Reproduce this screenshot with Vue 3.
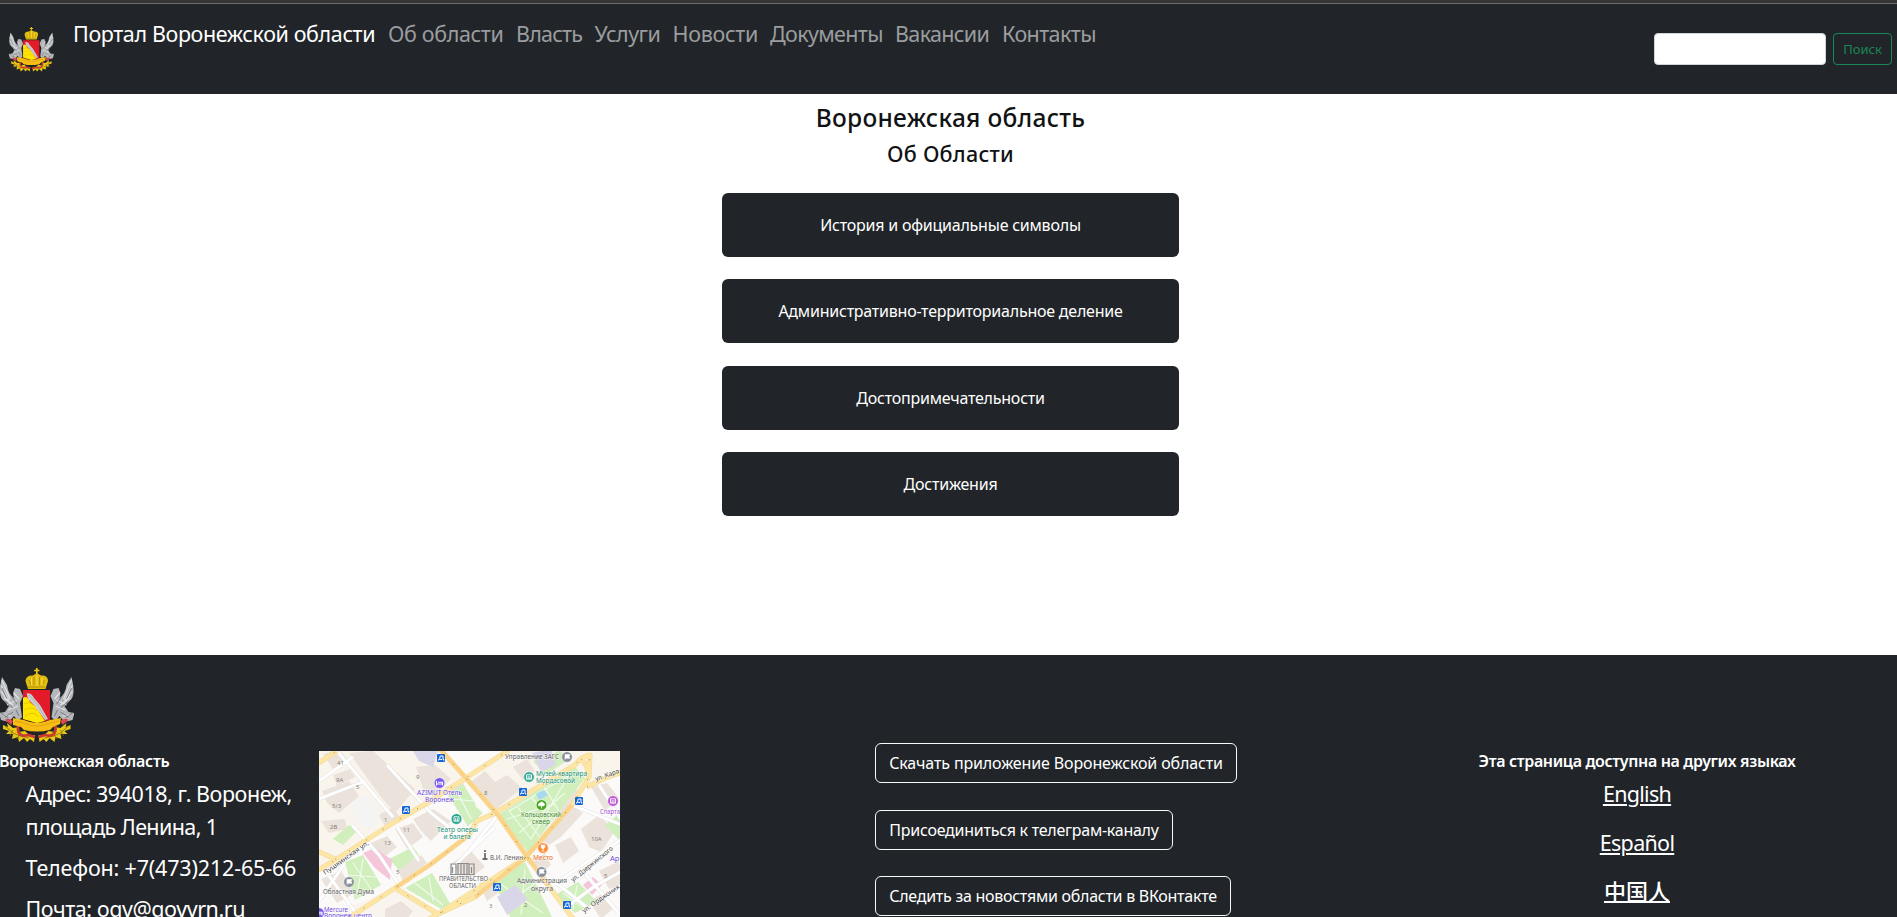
<script setup>
import { h } from 'vue'

const navItems = [
  { text: 'Об области', width: 128, spacing: -0.35 },
  { text: 'Власть', width: 78.5, spacing: -0.8 },
  { text: 'Услуги', width: 78, spacing: -0.5 },
  { text: 'Новости', width: 97.5, spacing: -0.3 },
  { text: 'Документы', width: 125, spacing: -0.65 },
  { text: 'Вакансии', width: 107, spacing: -0.65 },
  { text: 'Контакты', width: 100, spacing: -0.6 }
]
const sections = [
  'История и официальные символы',
  'Административно-территориальное деление',
  'Достопримечательности',
  'Достижения'
]
const contacts = [
  { lines: [{ text: 'Адрес: 394018, г. Воронеж,', spacing: -0.45 }, { text: 'площадь Ленина, 1', spacing: -0.6 }] },
  { lines: [{ text: 'Телефон: +7(473)212-65-66', spacing: -0.17 }] },
  { lines: [{ text: 'Почта: ogv@govvrn.ru', spacing: -0.45 }] }
]
const actions = [
  { text: 'Скачать приложение Воронежской области', width: 362, spacing: -0.13 },
  { text: 'Присоединиться к телеграм-каналу', width: 298, spacing: -0.25 },
  { text: 'Следить за новостями области в ВКонтакте', width: 356, spacing: -0.27 }
]
const languages = ['English', 'Español', '中国人']

const roads = [
  'M-2 100L23 111', 'M-2 13L18 0', 'M-4 121L21 106L74 72L110 51L156 21L190 -1',
  'M121 -2L146 26L179 64L209 107L246 157L256 170',
  'M28 168L76 137L112 113L150 84L158 70L176 62L256 14Q263 5 271 4L270 26L253 54L206 107L156 146L119 163L76 137',
  'M206 107L119 163L110 168', 'M262 8Q268 12 270 26', 'M268 36L284 28L303 21'
]
const streets = [
  'M18 0L74 66', 'M68 14L112 62L135 80', 'M33 74L60 104L84 140', 'M228 138L262 115L303 88',
  'M246 157L276 135L303 120', 'M262 118L303 166', 'M253 54L303 74', 'M0 30L34 6', 'M0 150L26 112', 'M176 76L130 120',
  'M280 34L303 70', 'M0 48L46 30', 'M10 125L40 166', 'M78 76L100 110', 'M206 107L270 158', 'M179 64L150 100'
]
const buildings = [
  '30,2 54,0 96,38 76,62 62,46', '97,16 116,14 132,28 116,44 104,38', '4,3 20,-1 30,10 14,18',
  '14,24 31,18 36,26 18,35', '3,40 30,30 40,45 20,62 8,52', '2,70 26,68 28,78 10,82', '2,128 22,120 36,142 18,152',
  '60,64 74,56 82,68 68,79', '76,78 94,72 104,86 88,98', '52,92 68,85 78,96 64,107', '94,68 114,58 132,70 112,90 102,80',
  '78,118 102,104 108,112 84,130', '133,112 152,100 166,116 146,131', '152,31 166,20 176,31 188,24 203,37 176,59 168,48',
  '194,16 208,8 216,20 204,29', '66,158 82,150 94,160 88,168 66,168', '126,36 144,31 151,48 142,60', '220,88 240,64 252,54 264,62 242,86 230,94',
  '262,78 280,64 296,80 282,101 270,96', '236,94 252,86 260,100 244,112', '212,112 226,102 232,114 220,124',
  '272,36 288,32 300,47 286,60', '160,132 174,127 182,140 168,150', '270,150 284,142 296,156 282,168', '250,36 263,40 245,65 232,76',
  '280,120 300,110 304,132 290,138'
]
const parks = [
  '179,64 256,16 266,27 209,101', '26,111 44,104 62,134 36,149', '86,137 113,122 132,154 122,158',
  '129,44 144,33 156,52 160,68 148,74', '173,127 206,111 234,168 192,168', '236,144 259,131 278,151 256,162',
  '286,74 303,60 303,92', '70,108 94,96 100,104 80,119', '14,88 30,74 40,78 24,94', '146,46 164,62 148,76', '214,10 240,0 254,6 226,24'
]
const parkPaths = [
  'M190 60L250 24L212 88Z', 'M198 55L222 88', 'M212 46L233 70', 'M225 36L240 60', 'M188 68L236 53', 'M200 82L246 42',
  'M34 112L52 138', 'M44 108L38 146', 'M28 124L58 126', 'M96 132L124 154', 'M110 126L114 150', 'M180 132L224 162', 'M206 118L202 164', 'M186 154L222 128',
  'M138 40L152 68', 'M132 48L154 50', 'M244 142L264 156', 'M258 134L254 158'
]
const numbers = [
  [18, 14, '41'], [17, 31, '9А'], [37, 38, '5'], [13, 57, '5/3'], [11, 78, '2В'], [65, 71, '1'], [84, 81, '11'],
  [65, 94, '13'], [77, 123, '5'], [97, 28, '9'], [165, 44, '8'], [272, 90, '10А'], [285, 127, '5'], [170, 157, '3'], [205, 156, '2']
]
const stops = [[122, 7], [87, 59], [204, 41], [260, 50], [178, 136], [248, 154]]
const labels = [
  { x: 98, y: 44, w: 45, c: '#6b4ae0', t: 'AZIMUT Отель' }, { x: 106, y: 51, w: 29, c: '#6b4ae0', t: 'Воронеж' },
  { x: 118, y: 80.5, w: 41, c: '#15917c', t: 'Театр оперы' }, { x: 124.5, y: 87.5, w: 27, c: '#15917c', t: 'и балета' },
  { x: 4, y: 143, w: 51, c: '#5d5d62', t: 'Областная Дума' }, { x: 5, y: 160.5, w: 24, c: '#6b4ae0', t: 'Mercure' },
  { x: 5, y: 167, w: 48, c: '#6b4ae0', t: 'Воронеж центр' }, { x: 186, y: 8, w: 54, c: '#5d5d62', t: 'Управление ЗАГС' },
  { x: 217, y: 24.5, w: 51, c: '#15917c', t: 'Музей-квартира' }, { x: 217, y: 31.5, w: 39, c: '#15917c', t: 'Мордасовой' },
  { x: 202, y: 65.5, w: 40, c: '#398522', t: 'Кольцовский' }, { x: 213, y: 72.5, w: 18, c: '#398522', t: 'сквер' },
  { x: 171, y: 108.5, w: 33, c: '#5d5d62', t: 'В.И. Ленин' }, { x: 214, y: 109, w: 20, c: '#e56a20', t: 'Место' },
  { x: 198, y: 132, w: 50, c: '#5d5d62', t: 'Администрация' }, { x: 212, y: 139.5, w: 22, c: '#5d5d62', t: 'округа' },
  { x: 120, y: 130, w: 49, c: '#5d5d62', t: 'ПРАВИТЕЛЬСТВО' }, { x: 130, y: 137, w: 27, c: '#5d5d62', t: 'ОБЛАСТИ' },
  { x: 281, y: 62.5, w: 20, c: '#a04fcf', t: 'Спарта' }, { x: 291, y: 110, w: 9.5, c: '#6b4ae0', t: 'Ар' }
]
const streetLabels = [
  { x: 6, y: 124, a: -35, w: 54, t: 'Пушкинская ул.' }, { x: 254, y: 131, a: -39, w: 52, t: 'ул. Дзержинского' },
  { x: 265, y: 162, a: -35, w: 44, t: 'ул. Орджоник' }, { x: 277, y: 30, a: -19, w: 25, t: 'ул. Кара' }
]
const pins = [
  [120.5, 32, '#7958ed'], [137.5, 68, '#24a58c'], [30, 131, '#8b8e9b'], [248, 6, '#8b8e9b'], [210, 26, '#35aa96'],
  [222.5, 54, '#44a51c'], [294, 50, '#bb55d4'], [224, 97, '#ff8b36'], [222.5, 121, '#8b8e9b'], [0, 162, '#7958ed']
]

// Regional coat of arms, shared by the header and the footer.
const wing = () => [
  h('path', { d: 'M2 9Q-3 28 4 33L9 38 5 44-1 45 1 52 9 54 14 48 18 53 22 49 20 35 23 28 20 21 15 20 13 25 14 30Q8 26 7 17Z', fill: '#b4b6b9' }),
  h('path', { d: 'M2 12L10 31M1 17L9 33M1 23L10 36M4 30L13 37M7 37L17 32M14 25L19 31M8 42L18 38M3 47L11 48', stroke: '#e2e3e4', 'stroke-width': 1.2, fill: 'none' }),
  h('path', { d: 'M2 20L7 31M5 33L13 40M12 29L17 36M5 49L13 44M16 42L19 48M1 45L8 50', stroke: '#707579', 'stroke-width': 0.9, fill: 'none' }),
  h('path', { d: 'M5 52Q8 49 13 53L11 57Z', fill: '#d94b50' }),
  h('path', { d: 'M3 57L8 59 7 55 13 60 19 59 18 64 25 63 30 68 35 67 34 74 30 71 27 74 24 70 19 74 18 69 12 71 13 66 6 66 9 63 3 61Z', fill: '#e8c814' }),
  h('path', { d: 'M5 58L13 65 20 68 29 70M13 62L10 68M21 64L17 71', stroke: '#836d10', 'stroke-width': 0.8, fill: 'none' }),
  h('path', { d: 'M18 58Q17 70 28 67L35 69', stroke: '#c93a2f', 'stroke-width': 2.8, fill: 'none' })
]
const Emblem = () =>
  h('svg', { viewBox: '0 0 74 75' }, [
    h('g', wing()),
    h('g', { transform: 'translate(73.500 0) scale(-1 1)' }, wing()),
    h('path', { d: 'M36 0h1.600v1.800h1.800v1.400h-1.800V6H36V3.200h-1.800V1.800H36Z', fill: '#f1c90b' }),
    h('path', { d: 'M28 21L25.500 13Q26 7 33 7.500L36.700 5 41 7.500Q48 7 48 13L45.500 21Z', fill: '#e2bd10' }),
    h('path', { d: 'M29 12L31 17M34 9V17M39.500 9V17M44.500 12L42.500 17M28 19H45', stroke: '#a9890c', 'stroke-width': 0.8, fill: 'none' }),
    h('path', { d: 'M31.500 10V17M37 7V18M42 10V17', stroke: '#ffe347', 'stroke-width': 0.9, fill: 'none' }),
    h('path', { d: 'M23 22H50V52L37 55 23 51Z', fill: '#e31b28' }),
    h('path', { d: 'M23 30Q27 27 30 34L36 39 45 53 37 55 23 51Z', fill: '#ffe600' }),
    h('path', { d: 'M24 36Q29 33 33 37M24 42Q31 38 37 42M25 48Q33 42 39 49', stroke: '#e0bd00', 'stroke-width': 0.8, fill: 'none' }),
    h('path', { d: 'M26.500 25.500Q31 24 34 30L40 37 48 51 45 52 34 37 28 31Z', fill: '#ccced2' }),
    h('path', { d: 'M28 26L37 36 46 51', stroke: '#a3a5aa', 'stroke-width': 0.7, fill: 'none' }),
    h('path', { d: 'M13 50L24 52Q37 58 50 52L61 50 60 56 53 59 50 62Q37 65 24 62L21 59 13 57Z', fill: '#f6bd14' }),
    h('path', { d: 'M15 53L24 55Q37 61 50 55L59 53', stroke: '#dd9b13', 'stroke-width': 0.8, fill: 'none' })
  ])
</script>

<template>
  <div class="page">
    <header class="header">
      <Emblem class="logo" />
      <a class="brand">Портал Воронежской области</a>
      <nav class="nav">
        <a v-for="item in navItems" :key="item.text" :style="{ width: item.width + 'px', letterSpacing: item.spacing + 'px' }">{{ item.text }}</a>
      </nav>
      <form class="search">
        <input type="text" />
        <button type="button">Поиск</button>
      </form>
    </header>

    <main class="main">
      <h1>Воронежская область</h1>
      <h2>Об Области</h2>
      <div class="sections">
        <a v-for="s in sections" :key="s">{{ s }}</a>
      </div>
    </main>

    <footer class="footer">
      <div class="about">
        <Emblem class="arms" />
        <h3>Воронежская область</h3>
        <p v-for="c in contacts" :key="c.lines[0].text">
          <span v-for="l in c.lines" :key="l.text" :style="{ letterSpacing: l.spacing + 'px' }">{{ l.text }}</span>
        </p>
      </div>

      <svg class="map" viewBox="0 0 301 166">
        <rect width="301" height="166" fill="#fbfaf8" />
        <polygon points="0,0 120,0 150,30 74,72 0,118" fill="#f9f4ec" />
        <polygon points="0,168 76,137 119,163 110,168" fill="#f9f5ee" />
        <polygon points="189,0 301,0 301,20 268,36 206,104 150,30" fill="#f9f4ec" />
        <polygon points="34,50 48,44 66,64 50,78 36,72" fill="#f4f4f3" />
        <polygon v-for="b in buildings" :key="b" :points="b" fill="#ebe3db" />
        <polygon v-for="p in parks" :key="p" :points="p" fill="#d0efbd" />
        <path v-for="p in parkPaths" :key="p" :d="p" fill="none" stroke="#f0faea" stroke-width="1.200" />
        <g fill="#f5c5d9">
          <polygon points="44,102 56,97 73,109 71,129 56,117" />
          <polygon points="264,134 274,126 283,134 273,144" />
        </g>
        <g fill="#d9d6ea">
          <polygon points="94,0 119,0 114,16 100,10" />
          <polygon points="213,2 232,-2 237,14 222,21" />
          <polygon points="178,146 196,134 209,148 188,164" />
        </g>
        <polygon points="217,43 225,39 229,44 220,49" fill="#a9d8f3" />
        <g fill="none">
          <path v-for="s in streets" :key="s" :d="s" stroke="#e2e1e4" stroke-width="3.800" />
          <path v-for="s in streets" :key="'w' + s" :d="s" stroke="#fff" stroke-width="2.900" />
          <path v-for="r in roads" :key="r" :d="r" stroke="#f3d897" stroke-width="5" stroke-linejoin="round" />
          <path v-for="r in roads" :key="'y' + r" :d="r" stroke="#fde5a4" stroke-width="4" stroke-linejoin="round" />
          <path d="M121 -2L146 26L179 64L209 107L230 135M76 137L112 113L150 84M253 54L206 107L156 146" stroke="#fbd388" stroke-width="3.800" />
          <path v-for="r in roads" :key="'d' + r" :d="r" stroke="#8d7c5c" stroke-width="1" stroke-dasharray="1 19" />
        </g>
        <g font-size="6" fill="#85817e">
          <text v-for="n in numbers" :key="n[0]" :x="n[0]" :y="n[1]">{{ n[2] }}</text>
        </g>
        <g v-for="s in stops" :key="s[0]" :transform="`translate(${s[0]} ${s[1]})`">
          <rect x="-4" y="-4" width="8" height="8" rx="1" fill="#1767db" />
          <path d="M-2.500 2.500V1.500H-1.500L-.8 -2H2V1.500H2.800V2.500M-.8 1.500H1" fill="none" stroke="#fff" stroke-width="1" />
        </g>
        <g v-for="p in pins" :key="p[0]" :transform="`translate(${p[0]} ${p[1]})`">
          <circle r="5.300" :fill="p[2]" stroke="#fff" stroke-width=".5" />
          <path v-if="p[2] === '#8b8e9b'" d="M-2 3V-2.500H3L2 -.5L3 1.200H-2" fill="#fff" stroke="#fff" stroke-width=".6" />
          <path v-else-if="p[2] === '#7958ed'" d="M-3 2.500V-2M-3 1H3V2.500M-1.500 -.8H3V1" fill="none" stroke="#fff" stroke-width="1.100" />
          <path v-else-if="p[2] === '#44a51c'" d="M0 3.500V0M-2.800 .8A2 2 0 0 1 -1.500 -2A2 2 0 0 1 2 -2A2 2 0 0 1 2.600 .8Z" fill="#fff" stroke="#fff" stroke-width=".8" />
          <path v-else-if="p[2] === '#ff8b36'" d="M-1.800 -3H1.800V-.5Q0 2 -1.800 -.5ZM0 0V3M-1.500 3H1.500" fill="#fff" stroke="#fff" stroke-width=".7" />
          <path v-else d="M-2.500 -2.200H2.500V2.200H-2.500ZM-.8 -.8V2M.9 -.8V2" fill="none" stroke="#fff" stroke-width=".9" />
        </g>
        <path d="M132 123V113h5v10M139 123V113M142 123V112M145 123V112M148 123V113M150 123V113h5v10M131 123.500h25M138 112.500h12M133.500 116v6M152.500 116v6" fill="none" stroke="#8b8b8e" stroke-width="1.200" />
        <path d="M163.500 108h5M166 107v-5M166 101v-2" stroke="#6d6d72" stroke-width="1.800" />
        <g class="labels" font-size="6.500">
          <text v-for="l in labels" :key="l.t" :x="l.x" :y="l.y" :fill="l.c" :textLength="l.w" lengthAdjust="spacingAndGlyphs">{{ l.t }}</text>
          <text v-for="s in streetLabels" :key="s.t" :transform="`translate(${s.x} ${s.y}) rotate(${s.a})`" fill="#403f42" :textLength="s.w" lengthAdjust="spacingAndGlyphs">{{ s.t }}</text>
        </g>
      </svg>

      <div class="actions">
        <a v-for="a in actions" :key="a.text" :style="{ width: a.width + 'px', letterSpacing: a.spacing + 'px' }">{{ a.text }}</a>
      </div>

      <div class="languages">
        <h3>Эта страница доступна на других языках</h3>
        <a v-for="l in languages" :key="l" :class="{ cjk: l === '中国人' }">{{ l }}</a>
      </div>
    </footer>
  </div>
</template>

<style scoped>
* {
  box-sizing: border-box;
}
.page {
  display: flex;
  flex-direction: column;
  height: 917px;
  overflow: hidden;
  background: #fff;
  color: #212529;
  font-family: "Noto Sans", "Open Sans", "Noto Sans CJK SC", sans-serif;
}
.header {
  display: flex;
  flex: none;
  height: 94px;
  padding: 13.5px 5px 0 9px;
  border-top: 3px solid #353535;
  background: #212529;
  box-shadow: inset 0 1px #6c6c6c;
  font-size: 21.5px;
  line-height: 33px;
  white-space: nowrap;
}
.logo {
  width: 45px;
  height: 45px;
  margin-top: 10px;
  overflow: visible;
}
.brand {
  width: 315px;
  margin-left: 19px;
  color: #fff;
  letter-spacing: -0.38px;
}
.nav {
  display: flex;
  color: #9b9d9f;
}
.nav a {
  flex: none;
}
.search {
  display: flex;
  gap: 7px;
  margin: 16.5px 0 0 auto;
  height: 32px;
}
.search input {
  width: 172px;
  padding: 0;
  border: 1px solid #ced4da;
  border-radius: 4px;
  background: #fff;
}
.search button {
  width: 59px;
  padding: 0;
  border: 1px solid #198754;
  border-radius: 4px;
  background: transparent;
  color: #198754;
  font: 400 13px/30px "Noto Sans", sans-serif;
}
.main {
  flex: none;
  height: 561px;
  padding: 8.5px 0 0 4px;
  text-align: center;
}
h1,
h2,
h3,
p {
  margin: 0;
}
h1,
h2 {
  color: #101214;
  font-weight: 550;
}
h1 {
  font-size: 24.5px;
  line-height: 29px;
  letter-spacing: 0.3px;
}
h2 {
  margin-top: 9px;
  font-size: 21.5px;
  line-height: 26px;
  letter-spacing: 0.25px;
}
.sections {
  display: flex;
  flex-direction: column;
  align-items: center;
  gap: 22.4px;
  margin-top: 26.5px;
}
.sections a {
  width: 457px;
  height: 64px;
  border-radius: 6px;
  background: #212529;
  color: #fff;
  font-size: 16px;
  line-height: 65px;
  letter-spacing: -0.22px;
}
.footer {
  display: flex;
  flex: none;
  height: 262px;
  overflow: hidden;
  background: #212529;
  color: #fff;
  white-space: nowrap;
}
.about {
  width: 319px;
  padding-top: 13px;
}
.arms {
  display: block;
  width: 74px;
  height: 75px;
}
h3 {
  font-size: 16px;
  line-height: 20px;
  font-weight: 600;
  letter-spacing: -0.3px;
}
.about h3 {
  margin: 7.5px 0 6px -1px;
}
.about p {
  margin: 0 0 8px 25.5px;
  font-size: 21.5px;
  line-height: 33px;
}
.about span {
  display: block;
}
.map {
  flex: none;
  width: 301px;
  height: 166px;
  margin-top: 96px;
}
.map text {
  font-family: "Noto Sans", sans-serif;
}
.labels text {
  paint-order: stroke;
  stroke: #fff;
  stroke-opacity: 0.75;
  stroke-width: 1px;
}
.actions {
  display: flex;
  flex-direction: column;
  gap: 26.5px;
  width: 362px;
  margin: 88px 0 0 255px;
}
.actions a {
  flex: none;
  height: 40px;
  border: 1px solid #f8f9fa;
  border-radius: 6px;
  font-size: 16px;
  line-height: 39px;
  text-align: center;
}
.languages {
  display: flex;
  flex-direction: column;
  align-items: center;
  width: 400px;
  margin: 95.5px 0 0 200px;
  font-size: 21.5px;
  line-height: 33px;
}
.languages h3 {
  margin-bottom: 6px;
  letter-spacing: -0.35px;
}
.languages a {
  flex: none;
  margin-bottom: 16px;
  letter-spacing: -0.7px;
  text-decoration: underline;
  text-decoration-thickness: 2px;
  text-underline-offset: 2px;
  text-decoration-skip-ink: auto;
}
.languages .cjk {
  height: 33px;
  margin-top: -1px;
  font-size: 22px;
  font-weight: 500;
  letter-spacing: 0;
  text-underline-offset: 1px;
  font-family: "Noto Sans CJK SC", sans-serif;
}
</style>

<style>
html,
body {
  margin: 0;
  overflow: hidden;
}
</style>
